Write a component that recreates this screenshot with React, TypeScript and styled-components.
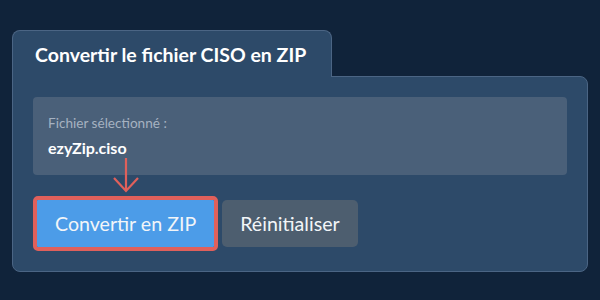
import styled, { createGlobalStyle } from "styled-components";

const GlobalStyle = createGlobalStyle`
  html, body {
    margin: 0;
    padding: 0;
    background: #10233a;
  }
  body {
    font-family: Lato, "Noto Sans", sans-serif;
    color: #ffffff;
  }
`;

const Page = styled.div`
  width: 600px;
  height: 300px;
  box-sizing: border-box;
  padding: 30px 12px 0;
  background: #10233a;
`;

const Tab = styled.div`
  position: relative;
  z-index: 1;
  display: inline-block;
  margin-bottom: -1px;
  padding: 12px 25px 10px 22px;
  background: #2d4a69;
  border: 1px solid #4b6584;
  border-bottom: none;
  border-radius: 8px 8px 0 0;
`;

const Title = styled.h2`
  margin: 0;
  font-size: 19.5px;
  line-height: 24px;
  font-weight: 700;
  color: #ffffff;
`;

const Panel = styled.div`
  display: flex;
  flex-direction: column;
  gap: 21px;
  padding: 20px;
  background: #2d4a69;
  border: 1px solid #4b6584;
  border-radius: 0 8px 8px 8px;
`;

const FileBox = styled.div`
  display: flex;
  flex-direction: column;
  gap: 7px;
  padding: 18px 15px;
  background: #4a6079;
  border-radius: 4px;
`;

const FileLabel = styled.span`
  font-size: 13.6px;
  color: #a6b2c1;
`;

const FileName = styled.span`
  font-size: 16px;
  font-weight: 700;
  color: #ffffff;
`;

const Actions = styled.div`
  display: flex;
  align-items: center;
  gap: 4px;
`;

const Highlight = styled.span`
  position: relative;
  display: inline-flex;
  border: 4px solid #e0605b;
  border-radius: 5px;
`;

const Pointer = styled.svg`
  position: absolute;
  left: 50%;
  bottom: calc(100% + 8px);
  transform: translateX(-50%);
  overflow: visible;
`;

const Button = styled.button<{ $variant: "primary" | "secondary" }>`
  height: 47px;
  padding: 0 18px;
  border: none;
  border-radius: ${(p) => (p.$variant === "primary" ? "1px" : "5px")};
  background: ${(p) => (p.$variant === "primary" ? "#4c9ce8" : "#4d5e6f")};
  color: #f2f5f8;
  font-family: Lato, "Noto Sans", sans-serif;
  font-size: 19.6px;
  font-weight: 400;
  cursor: pointer;
`;

export default function App() {
  return (
    <>
      <GlobalStyle />
      <Page>
        <Tab>
          <Title>Convertir le fichier CISO en ZIP</Title>
        </Tab>
        <Panel>
          <FileBox>
            <FileLabel>Fichier sélectionné :</FileLabel>
            <FileName>ezyZip.ciso</FileName>
          </FileBox>
          <Actions>
            <Highlight>
              <Pointer width="26" height="34" viewBox="0 0 26 34">
                <path d="M13 0 V33 M1 20 L13 33 L25 20" fill="none" stroke="#e0605b" strokeWidth="2.2" />
              </Pointer>
              <Button $variant="primary">Convertir en ZIP</Button>
            </Highlight>
            <Button $variant="secondary">Réinitialiser</Button>
          </Actions>
        </Panel>
      </Page>
    </>
  );
}
